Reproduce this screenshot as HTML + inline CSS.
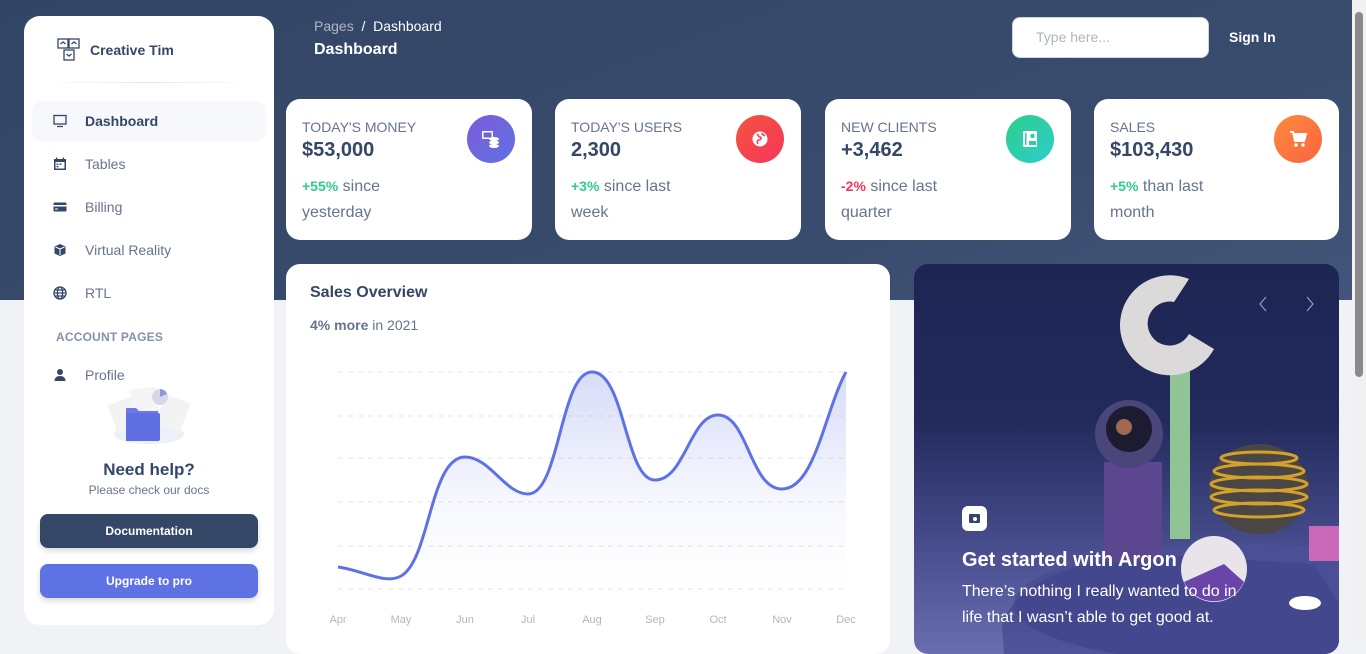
<!DOCTYPE html>
<html><head><meta charset="utf-8">
<style>
*{box-sizing:border-box;margin:0;padding:0}
body{width:1366px;height:641px;overflow:hidden;background:#f0f2f5;font-family:"Liberation Sans",sans-serif;position:relative;color:#344767}
.band{position:absolute;left:0;top:0;width:1352px;height:300px;background:linear-gradient(160deg,#324565 0%,#3a4c6e 70%,#43557a 100%)}
.scroll{position:absolute;right:0;top:0;width:14px;height:641px;background:#f1f1f1}
.scroll div{position:absolute;left:3px;top:12px;width:8px;height:365px;background:#8a8a8a;border-radius:4px}
.side{position:absolute;left:24px;top:16px;width:250px;height:609px;background:#fff;border-radius:16px}
.logo{position:absolute;left:33px;top:22px;display:flex;align-items:center;font-weight:bold;font-size:14px;color:#344767}
.hr{position:absolute;left:20px;top:66px;width:210px;height:1px;background:linear-gradient(90deg,transparent,#e3e6ec,transparent)}
.nav{position:absolute;left:8px;width:234px;height:40px;border-radius:10px;display:flex;align-items:center;font-size:14px;color:#67748e}
.nav svg{position:absolute;left:21px}
.nav span{position:absolute;left:53px}
.nav.act{background:#f6f8fb;color:#344767;font-weight:bold}
.sec{position:absolute;left:32px;top:314px;font-size:12px;font-weight:bold;color:#8392ab;letter-spacing:.2px}
.btn{position:absolute;left:16px;width:218px;height:34px;border-radius:8px;color:#fff;font-weight:bold;font-size:12px;display:flex;align-items:center;justify-content:center;box-shadow:0 3px 6px rgba(0,0,0,.15)}
.card{position:absolute;top:99px;width:246px;height:141px;background:#fff;border-radius:14px}
.card .t{position:absolute;left:16px;top:20px;font-size:14px;color:#67748e}
.card .v{position:absolute;left:16px;top:40px;font-size:20px;font-weight:bold;color:#344767}
.card .d{position:absolute;left:16px;top:74px;width:130px;font-size:16px;line-height:26px;color:#67748e}
.card .d b{color:#2dce89;font-size:14px}
.card .ic{position:absolute;right:17px;top:16px;width:48px;height:48px;border-radius:50%;display:flex;align-items:center;justify-content:center}
.chart{position:absolute;left:286px;top:264px;width:604px;height:390px;background:#fff;border-radius:14px}
.hero{position:absolute;left:914px;top:264px;width:425px;height:390px;border-radius:14px;overflow:hidden;background:linear-gradient(180deg,#1d2552 0%,#222a5c 40%,#4a5091 75%,#6a6eb0 100%)}
</style></head><body>
<div class="band"></div>
<div class="scroll"><div></div></div>

<div class="side">
 <div class="logo"><svg width="24" height="24" viewBox="0 0 24 24" fill="none" stroke="#344767" stroke-width="1.3"><rect x="1" y="1" width="10" height="9"/><rect x="12" y="1" width="10" height="9"/><rect x="7" y="12" width="10" height="10"/><path d="M3.5 6l2.5-2 2.5 2M14.5 6l2.5-2 2.5 2M9.5 16l2.5 2 2.5-2"/></svg><span style="margin-left:9px">Creative Tim</span></div>
 <div class="hr"></div>
 <div class="nav act" style="top:85px"><svg width="14" height="14" viewBox="0 0 14 14" fill="none" stroke="#344767" stroke-width="1.3"><rect x="1" y="1.5" width="12" height="8.5"/><path d="M4 12.5h6"/></svg><span>Dashboard</span></div>
 <div class="nav" style="top:128px"><svg width="14" height="14" viewBox="0 0 14 14"><rect x="1" y="2" width="12" height="11" fill="#344767"/><rect x="2.5" y="5" width="9" height="6.5" fill="#fff"/><rect x="3.5" y="6.5" width="2" height="1.3" fill="#344767"/><rect x="6.5" y="6.5" width="2" height="1.3" fill="#344767"/><rect x="3.5" y="9" width="2" height="1.3" fill="#344767"/><rect x="3" y="0.5" width="1.3" height="2.5" fill="#344767"/><rect x="9.7" y="0.5" width="1.3" height="2.5" fill="#344767"/></svg><span>Tables</span></div>
 <div class="nav" style="top:171px"><svg width="14" height="14" viewBox="0 0 14 14"><rect x="0.5" y="2.5" width="13" height="9" rx="1" fill="#344767"/><rect x="0.5" y="5" width="13" height="1.5" fill="#fff"/><rect x="2" y="8.5" width="3" height="1" fill="#fff"/></svg><span>Billing</span></div>
 <div class="nav" style="top:214px"><svg width="14" height="14" viewBox="0 0 14 14" fill="#344767"><path d="M7 1l5.5 2.5v7L7 13 1.5 10.5v-7z"/><path d="M2.5 4L7 6l4.5-2M7 6v6" stroke="#fff" stroke-width="1" fill="none"/></svg><span>Virtual Reality</span></div>
 <div class="nav" style="top:257px"><svg width="14" height="14" viewBox="0 0 14 14" fill="none" stroke="#344767" stroke-width="1.3"><circle cx="7" cy="7" r="6"/><ellipse cx="7" cy="7" rx="2.6" ry="6"/><path d="M1 7h12M2 4h10M2 10h10"/></svg><span>RTL</span></div>
 <div class="sec">ACCOUNT PAGES</div>
 <div class="nav" style="top:339px"><svg width="14" height="14" viewBox="0 0 14 14" fill="#344767"><circle cx="7" cy="4" r="3"/><path d="M1.5 13c0-3.5 2.5-5 5.5-5s5.5 1.5 5.5 5z"/></svg><span>Profile</span></div>
 <svg style="position:absolute;left:80px;top:368px" width="90" height="62" viewBox="0 0 90 62">
  <ellipse cx="45" cy="50" rx="35" ry="10" fill="#eef0f8"/>
  <rect x="8" y="16" width="26" height="30" fill="#f3f3f3" transform="rotate(-20 21 31)"/>
  <rect x="28" y="4" width="26" height="30" fill="#f5f5f5" transform="rotate(-8 41 19)"/>
  <rect x="56" y="14" width="26" height="30" fill="#f3f3f3" transform="rotate(20 69 29)"/>
  <circle cx="56" cy="13" r="8" fill="#d6d8e4"/><path d="M56 13V5a8 8 0 0 1 7 5z" fill="#8c97e3"/>
  <path d="M22 24h10l3 3h19v30H22z" fill="#6c7ae8"/><rect x="22" y="29" width="34" height="28" rx="2" fill="#5e6fe4"/>
 </svg>
 <div style="position:absolute;left:0;width:250px;top:444px;text-align:center;font-size:17px;font-weight:bold;color:#344767">Need help?</div>
 <div style="position:absolute;left:0;width:250px;top:467px;text-align:center;font-size:12px;color:#67748e">Please check our docs</div>
 <div class="btn" style="top:498px;background:#344767">Documentation</div>
 <div class="btn" style="top:548px;background:#5e72e4">Upgrade to pro</div>
</div>

<div style="position:absolute;left:314px;top:18px;font-size:14px;color:#fff"><span style="opacity:.6">Pages</span>&nbsp; / &nbsp;Dashboard</div>
<div style="position:absolute;left:314px;top:41px;font-size:16px;font-weight:bold;color:#fff">Dashboard</div>
<div style="position:absolute;left:1012px;top:17px;width:197px;height:41px;background:#fff;border-radius:8px;border:1px solid #d2d6da;font-size:14px;color:#adb5bd;padding:11px 0 0 23px">Type here...</div>
<div style="position:absolute;left:1229px;top:29px;font-size:14px;font-weight:bold;color:#fff">Sign In</div>

<div class="card" style="left:286px"><div class="t">TODAY'S MONEY</div><div class="v">$53,000</div><div class="d"><b>+55%</b> since yesterday</div>
 <div class="ic" style="background:linear-gradient(135deg,#7e5bd8,#5e72e4)"><svg width="20" height="20" viewBox="0 0 20 20" fill="#fff"><rect x="1" y="2" width="11" height="8" rx="1"/><rect x="2.5" y="3.5" width="8" height="5" fill="#6a66de"/><ellipse cx="13" cy="10" rx="5" ry="2"/><ellipse cx="13" cy="13.5" rx="5" ry="2"/><ellipse cx="13" cy="17" rx="5" ry="2"/></svg></div></div>
<div class="card" style="left:555px"><div class="t">TODAY'S USERS</div><div class="v">2,300</div><div class="d"><b>+3%</b> since last week</div>
 <div class="ic" style="background:linear-gradient(135deg,#f5533d,#f5365c)"><svg width="18" height="18" viewBox="0 0 18 18"><circle cx="9" cy="9" r="7.5" fill="#fff"/><path d="M6 4c2 1 1 3 3 3s1 3-1 3-2 2-1 4M11 3c0 2 2 2 3 3" stroke="#f3434c" stroke-width="1.6" fill="none"/></svg></div></div>
<div class="card" style="left:825px"><div class="t">NEW CLIENTS</div><div class="v">+3,462</div><div class="d"><b style="color:#f5365c">-2%</b> since last quarter</div>
 <div class="ic" style="background:linear-gradient(135deg,#2dce89,#2dcecc)"><svg width="18" height="18" viewBox="0 0 18 18"><rect x="2" y="1" width="14" height="16" rx="1" fill="#fff"/><circle cx="11.5" cy="6" r="2.2" fill="#2dce9c"/><path d="M8 11h7v4H8z" fill="#2dce9c"/><rect x="4" y="3" width="1.5" height="12" fill="#2dce9c"/></svg></div></div>
<div class="card" style="left:1094px;width:245px"><div class="t">SALES</div><div class="v">$103,430</div><div class="d"><b>+5%</b> than last month</div>
 <div class="ic" style="background:linear-gradient(135deg,#fb8c3c,#fb6340)"><svg width="20" height="20" viewBox="0 0 20 20" fill="#fff"><path d="M2 3h3l2 9h9l2-7H6.5" stroke="#fff" stroke-width="2" fill="none"/><rect x="7" y="6" width="10" height="5"/><circle cx="8" cy="16" r="1.7"/><circle cx="15" cy="16" r="1.7"/></svg></div></div>

<div class="chart">
 <div style="position:absolute;left:24px;top:20px;font-size:16px;font-weight:bold;color:#344767">Sales Overview</div>
 <div style="position:absolute;left:24px;top:53px;font-size:14px;color:#67748e"><b>4% more</b> in 2021</div>
</div>
<svg style="position:absolute;left:0;top:0" width="900" height="641">
 <defs><linearGradient id="g" x1="0" y1="0" x2="0" y2="1"><stop offset="0" stop-color="#5e72e4" stop-opacity=".25"/><stop offset=".6" stop-color="#5e72e4" stop-opacity=".05"/><stop offset="1" stop-color="#5e72e4" stop-opacity="0"/></linearGradient></defs>
 <g stroke="#e5e5e5" stroke-dasharray="5 5" stroke-width="1">
  <path d="M338 372H846M338 416H846M338 458H846M338 502H846M338 546H846M338 589H846"/>
 </g>
 <path d="M338 567C362 570 385 585 401 576C430 560 430 457 465 457C490 457 505 494 528 494C560 494 560 372 592 372C625 372 625 480 655 480C685 480 690 415 718 415C748 415 750 489 782 489C815 489 825 410 846 372V589H338Z" fill="url(#g)"/>
 <path d="M338 567C362 570 385 585 401 576C430 560 430 457 465 457C490 457 505 494 528 494C560 494 560 372 592 372C625 372 625 480 655 480C685 480 690 415 718 415C748 415 750 489 782 489C815 489 825 410 846 372" fill="none" stroke="#5e72e4" stroke-width="3"/>
 <g font-family="Liberation Sans" font-size="11" fill="#b2b6bd" text-anchor="middle">
  <text x="338" y="623">Apr</text><text x="401" y="623">May</text><text x="465" y="623">Jun</text><text x="528" y="623">Jul</text><text x="592" y="623">Aug</text><text x="655" y="623">Sep</text><text x="718" y="623">Oct</text><text x="782" y="623">Nov</text><text x="846" y="623">Dec</text>
 </g>
</svg>

<div class="hero">
 <svg width="425" height="390" style="position:absolute;left:0;top:0">
  <ellipse cx="330" cy="340" rx="230" ry="60" fill="#4b4f95"/>
  <path d="M88 360 Q110 300 240 290 L400 300 L425 340 L425 390 L90 390Z" fill="#3e4288" opacity=".6"/>
  <rect x="256" y="95" width="20" height="180" fill="#8fc494"/>
  <path d="M275 15 A50 50 0 1 0 300 85 L275 70 A22 22 0 1 1 260 38Z" fill="#dcd9db"/>
  <rect x="190" y="198" width="58" height="100" fill="#5d4690"/>
  <circle cx="215" cy="170" r="34" fill="#4a4679"/><circle cx="215" cy="165" r="23" fill="#1c1b30"/>
  <circle cx="210" cy="163" r="8" fill="#a0684e"/>
  <ellipse cx="345" cy="225" rx="50" ry="45" fill="#4a4646"/>
  <g stroke="#d4a22b" stroke-width="3" fill="none"><ellipse cx="345" cy="194" rx="38" ry="6"/><ellipse cx="345" cy="207" rx="45" ry="7"/><ellipse cx="345" cy="220" rx="48" ry="7"/><ellipse cx="345" cy="233" rx="48" ry="7"/><ellipse cx="345" cy="246" rx="45" ry="7"/></g>
  <rect x="395" y="262" width="30" height="35" fill="#c86ab8"/>
  <circle cx="300" cy="305" r="33" fill="#e8e4ea"/><path d="M270 318 A33 33 0 0 0 330 318 L310 300Z" fill="#6a45a8"/>
  <path d="M352 33l-6 7 6 7M393 33l6 7-6 7" stroke="#8e94c8" stroke-width="1.3" fill="none"/>
  <ellipse cx="391" cy="339" rx="16" ry="7" fill="#fff"/>
  <rect x="48" y="242" width="25" height="25" rx="6" fill="#fff"/>
  <rect x="55" y="250" width="11" height="9" rx="1" fill="#344767"/><circle cx="61" cy="255" r="2" fill="#fff"/>
 </svg>
 <div style="position:absolute;left:48px;top:285px;font-size:20px;font-weight:bold;color:#fff">Get started with Argon</div>
 <div style="position:absolute;left:48px;top:315px;width:292px;font-size:16px;line-height:26px;color:#fff">There’s nothing I really wanted to do in life that I wasn’t able to get good at.</div>
</div>
</body></html>
